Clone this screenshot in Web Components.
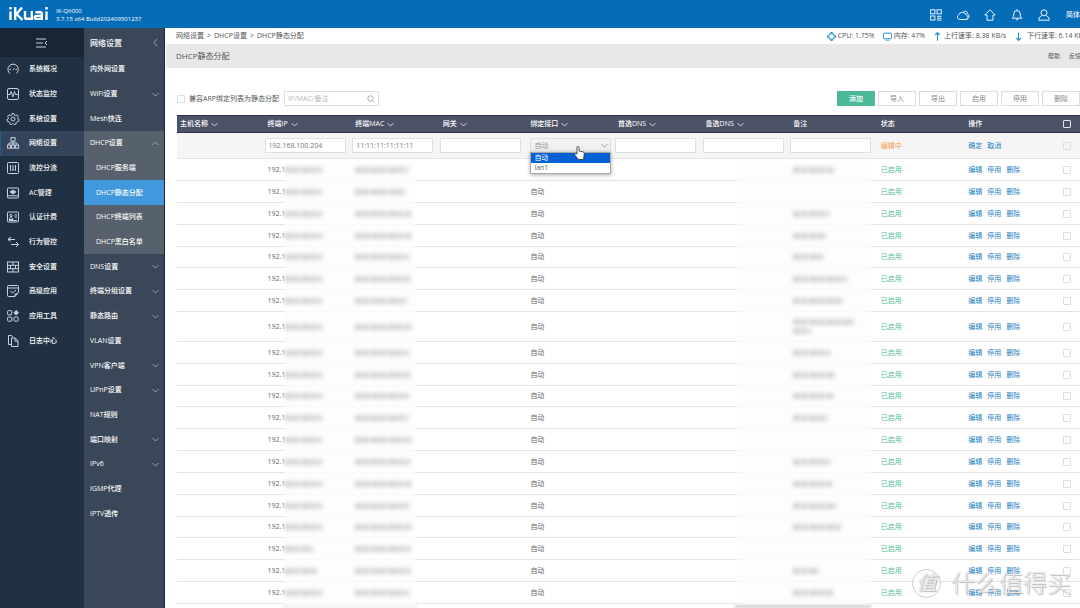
<!DOCTYPE html>
<html lang="zh-CN">
<head>
<meta charset="utf-8">
<title>DHCP静态分配</title>
<style>
html, body { height: 100%; }
body { margin: 0; overflow: hidden; background: #fff; color: #555; font: 7px/12px "Open Sans", "Noto Sans CJK SC", sans-serif; }
</style>
</head>
<body>
<ik-app></ik-app>

<script>
const ICONS = {
  fold: '<path d="M1 2h10M1 6h7M1 10h10M12 4l-2 2 2 2"/>',
  gauge: '<path d="M3 10.5A5.2 5.2 0 1 1 9.500 10.300M2.500 6.500h1.500M8.500 6.500h1.500M6 6.500l1.500-1M4 3.500l.6.6"/>',
  monitor: '<rect x=".5" y=".5" width="11" height="11" rx="1.500"/><path d="M1 6.500h2l1.200-3 1.600 5.500L7.500 3.500 8.500 6.500H11"/>',
  gear: '<circle cx="6" cy="6" r="2"/><path d="M5 .6h2l.4 1.500 1.300.5 1.400-.7 1.300 1.500-.8 1.200.4 1.400 1.100.6-.6 1.900-1.500.1-.9 1 .1 1.400-2 .6L6 10.400l-1.200 1.200-2-.6.100-1.400-.9-1-1.500-.1L0 6.600l1.100-.6.3-1.400L.6 3.400l1.300-1.500 1.400.7L4.600 2.100z"/>',
  tree: '<rect x="4" y=".6" width="4" height="3.500"/><rect x=".6" y="8" width="3" height="3.200"/><rect x="4.600" y="8" width="3" height="3.200"/><rect x="8.600" y="8" width="3" height="3.200"/><path d="M6 4v4M2 8V6h8v2"/>',
  sliders: '<rect x=".5" y=".5" width="11" height="11" rx="1"/><path d="M3.500 3v6M6 3v6M8.500 3v6M2.800 4.500h1.400M5.300 7.500h1.400M7.800 4.500h1.400"/>',
  ac: '<rect x=".5" y="1" width="11" height="10" rx="1"/><path d="M.5 8.800h11"/><path d="M2.800 5c2-2.300 4.400-2.300 6.400 0L6 7.300z" fill="currentColor" stroke-width=".5"/>',
  card: '<rect x=".5" y="1" width="11" height="10" rx="1"/><circle cx="4" cy="4.500" r="1.200"/><path d="M2 8.500c.3-2.500 3.700-2.500 4 0zM7.500 4h2.500M7.500 6h2.500M2 9.500h8"/>',
  arrows: '<path d="M4 1L1 3.500h7M3.500 1.500L1 3.500l2.500 2M4 8.500h7.500M9 6l2.500 2.500L9 11"/>',
  wall: '<rect x=".5" y="1" width="11" height="10"/><path d="M.5 4.300h11M.5 7.700h11M6 1v3.300M3.500 4.300v3.400M8.500 4.300v3.400M6 7.700V11"/>',
  advanced: '<path d="M11.500 7V1.500a1 1 0 0 0-1-1h-9a1 1 0 0 0-1 1v9a1 1 0 0 0 1 1H8zM.5 3h11M3.500 6l2 2 3.500-3M8 11.500V9h3"/>',
  tools: '<rect x=".6" y=".6" width="4.200" height="4.200" rx=".8"/><rect x=".6" y="7" width="4.200" height="4.200" rx=".8"/><rect x="7" y="7" width="4.200" height="4.200" rx=".8"/><path d="M9.200.4l2.200 2.300-2.200 2.400L7 2.700z" fill="currentColor"/>',
  log: '<path d="M4.500 9.500h-3v-9h3l1.500 2M4.500 3h3.700l2.800 3v5.500H4.500zM8 3v3.200h3"/>',
  down: '<path d="M2 4l4 4 4-4"/>',
  up: '<path d="M2 8l4-4 4 4"/>',
  left: '<path d="M8 1L4 6l4 5"/>',
  search: '<circle cx="5.200" cy="5.200" r="4"/><path d="M8.200 8.200L11.300 11.300"/>',
  grid: '<rect x=".6" y=".8" width="4.300" height="4"/><rect x="7" y=".8" width="4.300" height="4"/><rect x=".6" y="7" width="4.300" height="4"/><path d="M7 7.300h4.500M7 9.200h4.500M7 11.100h4.500"/>',
  cloud: '<path d="M2.800 10.500h6a2.300 2.300 0 0 0 .5-4.500A4 4 0 0 0 1.800 5.800 2.500 2.500 0 0 0 2.800 10.500zM6.500 3c2-2 4-.5 3.900 1.800 2.400.7 2.400 4.700-.9 5.500"/>',
  home: '<path d="M6 .8L.8 6H3v5.200h6V6h2.200z"/>',
  bell: '<path d="M1.200 9.200h9.600L9.300 7.400V5A3.300 3.300 0 0 0 6 1.600 3.300 3.300 0 0 0 2.700 5v2.400zM6 .3v1.300M5 9.500c0 2 2 2 2 0"/>',
  user: '<circle cx="6" cy="3.800" r="3"/><path d="M3.800 6.500L.9 9v2.200h10.200V9L8.200 6.500"/>',
  cpu: '<path d="M4 2.500h4L9.500 4v4L8 9.500H4L2.500 8V4zM4.500.7h3M4.500 11.300h3M.7 4.500v3M11.300 4.500v3" stroke-width="1.400"/>',
  memory: '<rect x=".7" y="1.500" width="10.600" height="7.500" rx="1" stroke-width="1.300"/><path d="M3 11h6"/>',
  rise: '<path d="M6 11.500V1M3 4l3-3.300L9 4" stroke-width="1.500"/>',
  fall: '<path d="M6 .5V11M3 8l3 3.300L9 8" stroke-width="1.500"/>'
};

function define(name, html, setup) {
  const template = document.createElement('template');
  template.innerHTML = html;
  customElements.define(name, class extends HTMLElement {
    connectedCallback() {
      if (this.shadowRoot) return;
      const root = this.attachShadow({ mode: 'open' });
      root.append(template.content.cloneNode(true));
      if (setup) setup.call(this, root);
    }
  });
}

/* Line icon on a 12-unit grid; --size sets the drawn size. */
define('ik-icon', `
<style>
:host { display: inline-block; width: var(--size, 12px); height: var(--size, 12px); flex: none; }
svg { display: block; width: 100%; height: 100%; overflow: visible; fill: none; stroke: currentColor; }
</style>
<svg viewBox="0 0 12 12" aria-hidden="true"></svg>`, function (root) {
  root.querySelector('svg').innerHTML = ICONS[this.getAttribute('name')];
});

define('ik-topbar', `
<style>
:host { display: flex; align-items: center; height: 28px; background: #056cb8; color: #fff; overflow: hidden; }
.logo { width: 40px; height: 14px; margin-left: 9px; flex: none; }
.info { margin-left: 7px; padding-top: 2px; font-size: 6px; line-height: 8px; flex: 1; white-space: nowrap; }
nav { display: flex; gap: 15px; align-items: center; padding-top: 2px; margin-right: -14px; }
nav a { display: flex; color: #e8f4ff; text-decoration: none; font-weight: 500; white-space: nowrap; line-height: 12px; }
nav a.lang { margin-left: 1px; }
</style>
<svg class="logo" viewBox="0 0 40 14" role="img" aria-label="iKuai" fill="none" stroke="#fff" stroke-width="2.400">
<path d="M1.500 4.500V13M1.500 0V2.500M6.200 0V13M13 .5L7.500 7l6 6M16 4v6.500q0 1.300 1.300 1.300h5.500V4M26.500 5.200h5q1.300 0 1.300 1.300v5.400h-5.500q-1.500 0-1.500-1.500t1.500-1.500h5M37.500 4.500V13M37.500 0V2.500"/>
</svg>
<div class="info"><div>IK-Q6000</div><div>3.7.15 x64 Build202409301237</div></div>
<nav>
<a href="#apps" aria-label="apps"><ik-icon name="grid"></ik-icon></a>
<a href="#cloud" aria-label="cloud"><ik-icon name="cloud"></ik-icon></a>
<a href="#home" aria-label="home"><ik-icon name="home"></ik-icon></a>
<a href="#alerts" aria-label="alerts"><ik-icon name="bell"></ik-icon></a>
<a href="#user" aria-label="user"><ik-icon name="user"></ik-icon></a>
<a class="lang" href="#lang">简体中文</a>
</nav>`);

define('ik-rail', `
<style>
:host { display: block; width: 84px; background: #203144; color: #fff; }
button { display: flex; align-items: center; justify-content: center; width: 100%; height: 29px; padding: 0 2px 0 0; border: 0; background: #1a2534; color: #d5dbe2; }
nav { display: grid; grid-auto-rows: 1fr; height: 296px; }
a { display: flex; align-items: center; gap: 10px; padding-left: 7px; color: #fff; text-decoration: none; font-weight: 500; }
a[aria-current] { background: #34445a; box-shadow: inset 1px 0 #1e5c92; }
ik-icon { color: #c9d2dc; }
</style>
<button aria-label="fold"><ik-icon name="fold"></ik-icon></button>
<nav></nav>`, function (root) {
  const items = [['gauge', '系统概况'], ['monitor', '状态监控'], ['gear', '系统设置'], ['tree', '网络设置'], ['sliders', '流控分流'], ['ac', 'AC管理'], ['card', '认证计费'], ['arrows', '行为管控'], ['wall', '安全设置'], ['advanced', '高级应用'], ['tools', '应用工具'], ['log', '日志中心']];
  root.querySelector('nav').innerHTML = items.map(([icon, text]) =>
    `<a href="#${icon}"${icon === 'tree' ? ' aria-current="true"' : ''}><ik-icon name="${icon}"></ik-icon>${text}</a>`).join('');
});

define('ik-menu', `
<style>
:host { display: block; width: 80px; background: #3a4758; color: #fff; border-right: 1px solid #1c2740; }
a, header { display: flex; align-items: center; justify-content: space-between; padding: 0 4px 0 6px; color: #fff; text-decoration: none; font-weight: 500; }
header { height: 29px; font-size: 8px; }
nav { display: grid; grid-auto-rows: 1fr; height: 469px; }
.open, .sub { background: #56616d; }
.sub { padding-left: 12px; }
.sub[aria-current] { background: #4298dc; }
ik-icon { --size: 9px; color: #b4bec9; }
</style>
<header>网络设置<ik-icon name="left"></ik-icon></header>
<nav></nav>`, function (root) {
  const items = ['内外网设置', 'WiFi设置+', 'Mesh快连', 'DHCP设置^', '-DHCP服务端', '-DHCP静态分配', '-DHCP终端列表', '-DHCP黑白名单', 'DNS设置+', '终端分组设置+', '静态路由+', 'VLAN设置', 'VPN客户端+', 'UPnP设置+', 'NAT规则', '端口映射+', 'IPv6+', 'IGMP代理', 'IPTV透传'];
  root.querySelector('nav').innerHTML = items.map(item => {
    const text = item.replace(/^-|[+^]$/g, '');
    const kind = item[0] === '-' ? 'sub' : item.endsWith('^') ? 'open' : '';
    const icon = item.endsWith('+') ? '<ik-icon name="down"></ik-icon>' : item.endsWith('^') ? '<ik-icon name="up"></ik-icon>' : '';
    return `<a class="${kind}" href="#${text}"${text === 'DHCP静态分配' ? ' aria-current="page"' : ''}>${text}${icon}</a>`;
  }).join('');
});

define('ik-status', `
<style>
:host { display: flex; justify-content: space-between; align-items: center; height: 16px; padding-left: 11px; white-space: nowrap; overflow: hidden; }
nav { display: flex; gap: 3px; }
nav a { color: #555; text-decoration: none; }
.stats { display: flex; gap: 8px; margin-right: -9px; }
.stats span { display: flex; align-items: center; gap: 2px; }
ik-icon { --size: 9px; color: #2a93d1; }
</style>
<nav><a href="#net">网络设置</a><span>&gt;</span><a href="#dhcp">DHCP设置</a><span>&gt;</span><a href="#static">DHCP静态分配</a></nav>
<div class="stats">
<span><ik-icon name="cpu"></ik-icon>CPU: 1.75%</span>
<span><ik-icon name="memory"></ik-icon>内存: 47%</span>
<span><ik-icon name="rise"></ik-icon>上行速率: 8.38 KB/s</span>
<span><ik-icon name="fall"></ik-icon>&nbsp;下行速率: 6.14 KB/s</span>
</div>`);

define('ik-titlebar', `
<style>
:host { display: flex; justify-content: space-between; align-items: center; height: 24px; margin-left: 1px; padding-left: 10px; background: #e8e8e8; white-space: nowrap; overflow: hidden; }
h1 { margin: 0; font-size: 8px; font-weight: 400; color: #555; }
nav { display: flex; gap: 9px; margin-right: -1px; font-size: 6px; }
a { color: #555; text-decoration: none; }
</style>
<h1><slot></slot></h1>
<nav><a href="#help">帮助</a><a href="#feedback">反馈</a></nav>`);

define('ik-button', `
<style>
:host { display: block; width: 38px; }
button { box-sizing: border-box; display: block; width: 100%; height: 15px; padding: 0; border: 1px solid #dcdcdc; background: #fff; color: #888; font: inherit; line-height: 13px; }
:host([primary]) button { background: #4bb899; border-color: #4bb899; color: #fff; font-weight: 500; }
</style>
<button type="button"><slot></slot></button>`);

define('ik-toolbar', `
<style>
:host { display: flex; align-items: center; height: 15px; }
input[type=checkbox] { appearance: none; width: 8px; height: 8px; margin: 0 4px 0 0; border: 1px solid #ddd; border-radius: 1px; background: #fff; }
label { color: #555; margin-right: 5px; white-space: nowrap; }
.search { box-sizing: border-box; display: flex; align-items: center; width: 95px; height: 15px; border: 1px solid #dedede; padding: 0 3px; }
.search input { flex: 1; min-width: 0; padding: 0; border: 0; outline: 0; background: none; font: inherit; }
.search input::placeholder { color: #bbb; }
.search ik-icon { --size: 8px; color: #888; }
.actions { display: flex; gap: 3px; margin-left: auto; }
</style>
<input type="checkbox" id="arp"><label for="arp">兼容ARP绑定列表为静态分配</label>
<div class="search"><input type="text" aria-label="search" placeholder="IP/MAC/备注"><ik-icon name="search"></ik-icon></div>
<div class="actions">
<ik-button primary>添加</ik-button><ik-button>导入</ik-button><ik-button>导出</ik-button><ik-button>启用</ik-button><ik-button>停用</ik-button><ik-button>删除</ik-button>
</div>`);

/* A censored value: a smudge with the length of the hidden content. */
define('ik-smudge', `
<style>
:host { display: block; height: 6px; filter: blur(2px); background: repeating-linear-gradient(90deg, #bcbebc 0 6px, #d2d2d2 6px 9px, #c2c2c2 9px 14px, #ddd 14px 17px); opacity: .7; }
</style>`);

define('ik-table', `
<style>
:host { display: block; position: relative; }
table { width: 100%; table-layout: fixed; border-collapse: separate; border-spacing: 0; }
th, td { box-sizing: border-box; padding: 0 0 0 3px; text-align: left; font-weight: 400; white-space: nowrap; }
th { height: 18px; background: #4b5267; border: solid #2a3353; border-width: 1px 0; color: #fff; font-weight: 500; }
th ik-icon { --size: 9px; vertical-align: middle; margin-left: 2px; }
.pick { width: 27px; padding: 0; text-align: center; }
td { height: 22px; border-bottom: 1px solid #e3e3e3; color: #666; }
tr:nth-child(6n) td { height: 21px; }
tr.tall td { height: 30px; }
tr.edit td { height: 26px; background: #f5f5f5; padding-left: 0; }
tr.edit td.text { padding-left: 3px; }
tr.edit td.pick { padding: 0; }
.edit input[type=text], .edit select { box-sizing: border-box; display: block; width: 81px; height: 15px; margin: 0; padding: 0 3px; border: 1px solid #e0e0e0; border-radius: 0; background: #fff; color: #777; font: inherit; outline: 0; }
.edit select { appearance: none; background: linear-gradient(#f5f5f5, #ececec); color: #999; }
.picker { position: relative; width: 81px; }
.picker ik-icon { --size: 9px; position: absolute; right: 2px; top: 3px; color: #888; }
.picker ul { position: absolute; z-index: 3; left: 0; top: 14px; box-sizing: border-box; width: 81px; margin: 0; padding: 0; list-style: none; border: 1px solid #aaa; background: #fff; box-shadow: 0 1px 4px #0005; color: #666; }
.picker li { padding-left: 3px; line-height: 10px; }
.picker li.on { background: #0560d6; color: #fff; }
.cursor { position: absolute; z-index: 4; left: 44px; top: 8px; width: 11px; height: 14px; }
input[type=checkbox] { appearance: none; display: block; width: 8px; height: 8px; margin: 0 auto; border: 1px solid #ddd; border-radius: 1px; }
th input[type=checkbox] { border-color: #dfe3ea; }
.wait { color: #f2a04c; }
.on-state { color: #55bd97; }
td a { color: #1c80c0; text-decoration: none; margin-right: 5px; }
.ip { display: flex; align-items: center; }
.ip ik-smudge, .mac ik-smudge, .note ik-smudge { position: relative; z-index: 2; }
.note ik-smudge + ik-smudge { margin-top: 3px; }
/* Haze of the censored columns, over the row lines. */
.haze { position: absolute; top: 46px; bottom: 0; background: #fdfdfd; opacity: .85; filter: blur(1px); }
.haze.a { left: 107px; width: 132px; }
.haze.b { right: 209px; width: 134px; }
.tail { display: flex; height: 4px; }
.tail i { height: 3px; margin-top: 1px; filter: blur(1px); background: #d0d0d0; }
.tail i:first-child { width: 136px; margin-left: 105px; background: #f0f0f0; }
.tail i:last-child { width: 136px; margin: 1px 209px 0 auto; }
</style>
<table>
<thead><tr></tr></thead>
<tbody></tbody>
</table>
<div class="haze a"></div><div class="haze b"></div>
<div class="tail"><i></i><i></i></div>`, function (root) {
  const heads = ['主机名称+', '终端IP+', '终端MAC+', '网关+', '绑定接口+', '首选DNS+', '备选DNS+', '备注', '状态', '操作'];
  root.querySelector('thead tr').innerHTML = heads.map(h =>
    `<th>${h.replace('+', '')}${h.endsWith('+') ? '<ik-icon name="down"></ik-icon>' : ''}</th>`).join('') +
    '<th class="pick"><input type="checkbox" aria-label="all"></th>';

  const box = (label, value = '') => `<td><input type="text" aria-label="${label}" value="${value}"></td>`;
  const edit = `<tr class="edit"><td></td>${box('终端IP', '192.168.100.204')}${box('终端MAC', '11:11:11:11:11:11')}${box('网关')}
    <td class="text"><div class="picker"><select aria-label="绑定接口"><option>自动</option><option>lan1</option></select><ik-icon name="down"></ik-icon>
    <ul><li class="on">自动</li><li>lan1</li></ul>
    <svg class="cursor" viewBox="0 0 11 14"><path d="M3 8V1.500q0-1 1-1t1 1V5l4 .8q1.500.4 1.300 2L9.500 13.500h-5L.8 9q-.6-1.200.6-1.500z" fill="#fff" stroke="#333" stroke-width=".8"/></svg></div></td>
    ${box('首选DNS')}${box('备选DNS')}${box('备注')}
    <td class="text wait">编辑中</td><td class="text"><a href="#ok">确定</a><a href="#cancel">取消</a></td>
    <td class="pick"><input type="checkbox" aria-label="row"></td></tr>`;

  /* Smudge lengths per row: IP, MAC, note. */
  const rows = [
    [37, 53, [41]], [37, 51, []], [37, 56, [36]], [37, 56, [34]], [37, 54, [30]], [37, 55, [54]], [37, 52, [50]], [37, 56, [61, 18]],
    [37, 54, [37]], [37, 55, [42]], [37, 54, [40]], [37, 53, [35]], [37, 56, []], [37, 55, [37]], [37, 56, [39]], [37, 54, [43]],
    [37, 56, [48]], [28, 55, []], [32, 55, [26]], [37, 54, [40]]
  ];
  const smudge = w => `<ik-smudge style="width:${w}px"></ik-smudge>`;
  root.querySelector('tbody').innerHTML = edit + rows.map(([ip, mac, note], i) =>
    `<tr class="${note.length > 1 ? 'tall' : ''}"><td></td><td><div class="ip">192.1${smudge(ip)}</div></td><td class="mac">${smudge(mac)}</td><td></td>
    <td>${i ? '自动' : ''}</td><td></td><td></td><td class="note">${note.map(smudge).join('')}</td>
    <td class="on-state">已启用</td><td><a href="#edit">编辑</a><a href="#stop">停用</a><a href="#del">删除</a></td>
    <td class="pick"><input type="checkbox" aria-label="row"></td></tr>`).join('');
});

define('ik-watermark', `
<style>
:host { position: absolute; right: 9px; bottom: 9px; display: flex; align-items: center; gap: 10px; font-size: 24px; line-height: 32px; font-weight: 300; color: #fffc; text-shadow: 1px 1px 1px #999a, 0 0 1px #aaa; pointer-events: none; white-space: nowrap; }
b { box-sizing: border-box; width: 29px; height: 29px; border: 1px solid #ccc; border-radius: 50%; background: #fff9; font-size: 20px; line-height: 26px; font-weight: 400; font-style: italic; text-align: center; }
</style>
<b>值</b><span>什么值得买</span>`);

define('ik-app', `
<style>
:host { display: grid; grid-template: auto 1fr / auto auto 1fr; height: 100vh; position: relative; overflow: hidden; }
ik-topbar { grid-column: 1 / -1; }
main { min-width: 0; min-height: 0; overflow: hidden; }
.panel { padding: 23px 0 0 12px; display: grid; gap: 9px; }
</style>
<ik-topbar></ik-topbar>
<ik-rail></ik-rail>
<ik-menu></ik-menu>
<main>
<ik-status></ik-status>
<ik-titlebar>DHCP静态分配</ik-titlebar>
<div class="panel"><ik-toolbar></ik-toolbar><ik-table></ik-table></div>
</main>
<ik-watermark></ik-watermark>`);
</script>
</body>
</html>
